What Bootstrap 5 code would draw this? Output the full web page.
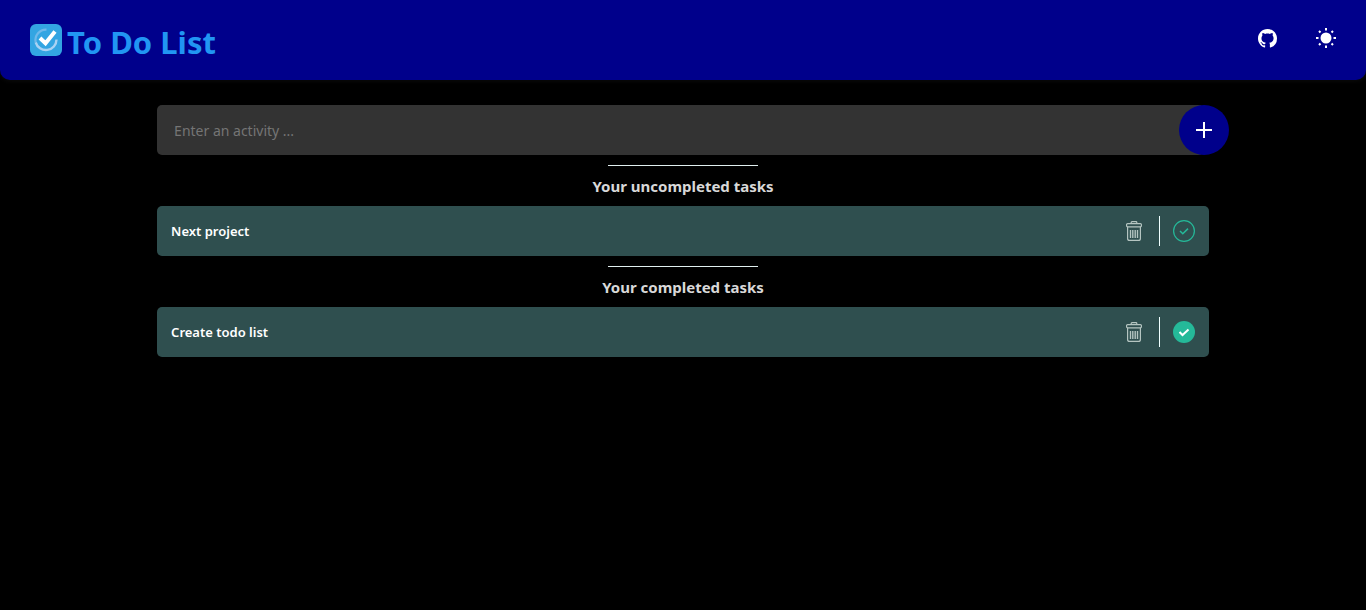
<!DOCTYPE html>
<html lang="en">
<head>
<meta charset="utf-8">
<meta name="viewport" content="width=device-width, initial-scale=1">
<title>To Do List</title>
<link href="https://cdn.jsdelivr.net/npm/bootstrap@5.3.0/dist/css/bootstrap.min.css" rel="stylesheet">
<style>
  body { background: #000; color: #fff; font-family: "Segoe UI", "Noto Sans", sans-serif; }
  .top-bar { background: #00008b; height: 80px; padding: 0 30px; border-radius: 0 0 10px 10px; box-shadow: 0 1px 5px #0c0c0c; }
  .brand-group { gap: 5px; }
  .brand { color: #2196f3; font-size: 31px; line-height: 38px; font-weight: 700; }
  .bar-icons { gap: 39px; }
  .tool { background: none; border: 0; padding: 0; color: #fff; display: block; line-height: 0; }
  .tool svg, .brand-icon { display: block; }
  .todo { width: 77%; padding-top: 25px; }
  .entry { background: #333; border: 0; border-radius: 5px; height: 50px; padding: 0 17px; color: #fff; font-size: 14px; }
  .entry:focus { background: #333; color: #fff; }
  .entry::placeholder { color: #757575; }
  .add-form { margin-right: -20px; }
  .add { width: 50px; height: 50px; background: #00008b; margin-left: -25px; z-index: 6; }
  .add:hover { background: #0000a8; }
  .rule { width: 150px; height: 1px; margin: 10px auto 0; background: #e0eeee; opacity: 1; border: 0; }
  .section-title { font-size: 15px; line-height: 20px; font-weight: 700; color: #d8d8d8; margin: 10px 0; }
  .task { background: #2f4f4f; border-radius: 5px; height: 50px; padding: 0 14px; }
  .task-name { font-size: 13px; line-height: 20px; font-weight: 600; }
  .divider { width: 1px; height: 30px; background: #f0ffff; margin: 0 13px 0 17px; }
</style>
</head>
<body>
<svg class="d-none" aria-hidden="true">
  <symbol id="trash" viewBox="0 0 16 20">
    <g fill="none" stroke="#b5c5c1" stroke-width="1.200">
      <rect x=".6" y="2.600" width="14.800" height="3.200" rx="1"/>
      <path d="M5.200 2.600V1.400q0-.8.800-.8h4q.8 0 .8.800v1.200M1.600 5.800v11.600q0 2 2 2h8.800q2 0 2-2V5.800"/>
      <path d="M4.500 9v8M6.800 9v8M9.200 9v8M11.500 9v8" stroke-width="1.400"/>
    </g>
  </symbol>
</svg>

<header class="top-bar d-flex align-items-center justify-content-between">
  <div class="brand-group d-flex align-items-center">
    <svg class="brand-icon" width="32" height="32" viewBox="0 0 32 32" aria-hidden="true">
      <rect width="32" height="32" rx="6" fill="#33a5e2"/>
      <path d="M16.500 5.600A10.600 10.600 0 0 0 5.700 18.300" fill="none" stroke="#70b9ea" stroke-width="2.200"/>
      <path d="M5.700 18.300A10.600 10.600 0 0 0 26.500 15.500" fill="none" stroke="#a9d2f3" stroke-width="2.400"/>
      <path d="M10 14l5.500 5.200L25 7.500" fill="none" stroke="#fff" stroke-width="4"/>
    </svg>
    <h1 class="brand mb-0 mt-1">To Do List</h1>
  </div>
  <div class="bar-icons d-flex align-items-center pb-1">
    <a class="tool" href="#" aria-label="GitHub">
      <svg width="19" height="19" viewBox="0 0 16 16" fill="currentColor"><path d="M8 0C3.580 0 0 3.580 0 8c0 3.540 2.290 6.530 5.470 7.590.4.070.55-.17.55-.38 0-.19-.01-.82-.01-1.490-2.010.37-2.530-.49-2.690-.94-.09-.23-.48-.94-.82-1.130-.28-.15-.68-.52-.01-.53.63-.01 1.080.58 1.230.82.72 1.210 1.870.87 2.330.66.07-.52.28-.87.51-1.070-1.780-.2-3.640-.89-3.640-3.950 0-.87.31-1.590.82-2.150-.08-.2-.36-1.020.08-2.120 0 0 .67-.21 2.200.82.64-.18 1.320-.27 2-.27s1.360.09 2 .27c1.530-1.040 2.200-.82 2.200-.82.44 1.100.16 1.920.08 2.120.51.56.82 1.270.82 2.150 0 3.070-1.870 3.750-3.650 3.950.29.25.54.73.54 1.480 0 1.070-.01 1.930-.01 2.200 0 .21.15.46.55.38A8.010 8.010 0 0 0 16 8c0-4.420-3.580-8-8-8z"/></svg>
    </a>
    <button class="tool" type="button" aria-label="Light mode">
      <svg width="20" height="20" viewBox="0 0 20 20" fill="none" stroke="currentColor" stroke-width="2"><circle cx="10" cy="10" r="5.500" fill="currentColor" stroke="none"/><path d="M10 0v2.500M10 17.500v2.500M0 10h2.500M17.500 10H20M3 3l1.500 1.500M15.500 15.500L17 17M17 3l-1.500 1.500M4.500 15.500L3 17"/></svg>
    </button>
  </div>
</header>

<main class="todo mx-auto">
  <form class="add-form d-flex">
    <input class="entry form-control flex-grow-1" type="text" placeholder="Enter an activity ..." aria-label="Activity">
    <button class="add btn rounded-circle border-0 p-0 flex-shrink-0 d-flex align-items-center justify-content-center" type="button" aria-label="Add task">
      <svg width="16" height="16" viewBox="0 0 16 16"><path d="M8 0v16M0 8h16" stroke="#fff" stroke-width="2"/></svg>
    </button>
  </form>

  <section>
    <hr class="rule">
    <h2 class="section-title text-center">Your uncompleted tasks</h2>
    <div class="task d-flex align-items-center">
      <span class="task-name me-auto">Next project</span>
      <button class="tool" type="button" aria-label="Delete Next project"><svg width="16" height="20"><use href="#trash"/></svg></button>
      <span class="divider"></span>
      <button class="tool" type="button" aria-label="Complete Next project">
        <svg width="22" height="22" viewBox="0 0 22 22" fill="none" stroke="#25b999"><circle cx="11" cy="11" r="10.400" stroke-width="1.200"/><path d="M7 11l2.800 2.800L15 8.600" stroke-width="1.500"/></svg>
      </button>
    </div>
  </section>

  <section>
    <hr class="rule">
    <h2 class="section-title text-center">Your completed tasks</h2>
    <div class="task d-flex align-items-center">
      <span class="task-name me-auto">Create todo list</span>
      <button class="tool" type="button" aria-label="Delete Create todo list"><svg width="16" height="20"><use href="#trash"/></svg></button>
      <span class="divider"></span>
      <button class="tool" type="button" aria-label="Mark Create todo list as not done">
        <svg width="22" height="22" viewBox="0 0 22 22"><circle cx="11" cy="11" r="11" fill="#25b999"/><path d="M6.500 11l3 3L15.500 8.500" fill="none" stroke="#fff" stroke-width="2"/></svg>
      </button>
    </div>
  </section>
</main>
<script src="https://cdn.jsdelivr.net/npm/bootstrap@5.3.0/dist/js/bootstrap.bundle.min.js"></script>
</body>
</html>
